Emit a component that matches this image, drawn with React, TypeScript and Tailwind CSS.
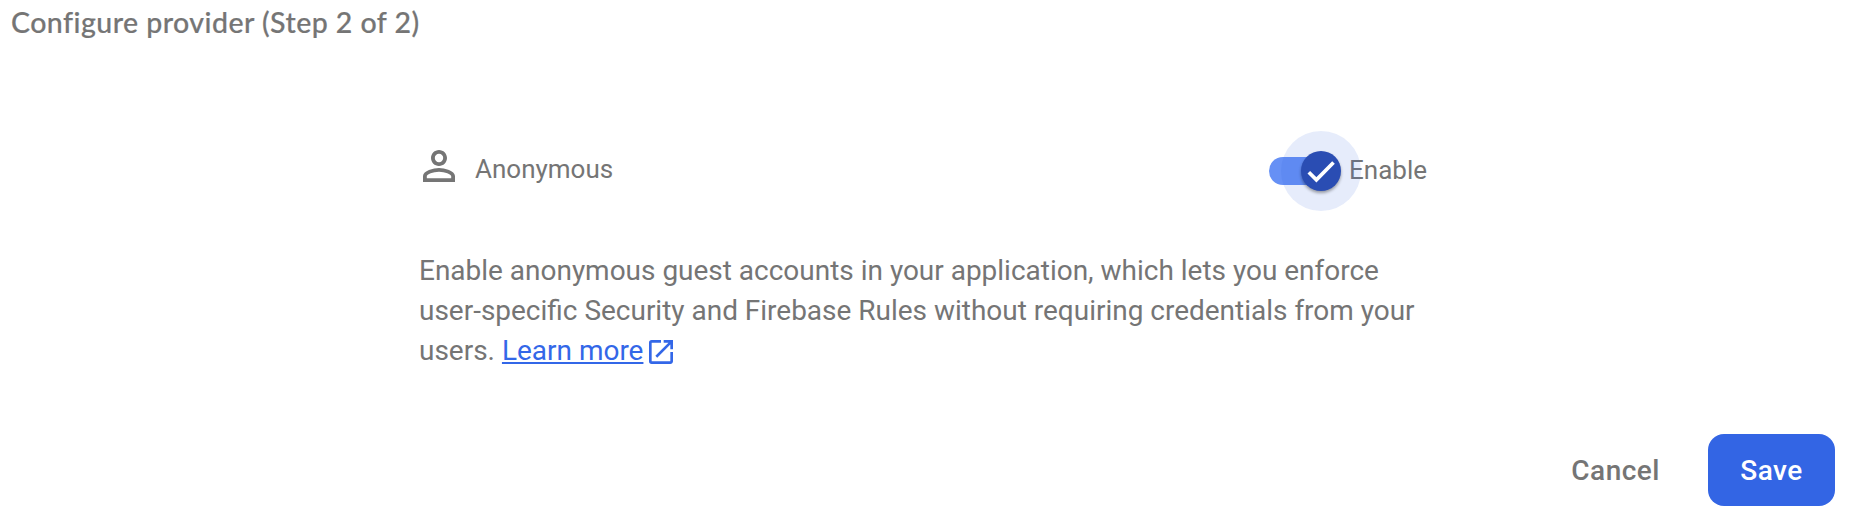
export default function App() {
  return (
    <main className="h-[528px] w-[1854px] overflow-hidden bg-white pt-[6px] font-[Roboto,sans-serif] text-[#757575]">
      <h1 className="pl-[11px] font-['Lato',sans-serif] text-[28.5px] leading-8 font-medium tracking-[0.46px] [-webkit-text-stroke:0.2px_#757575]">Configure provider (Step 2 of 2)</h1>
      <section className="mt-[93px] ml-[419px] w-[1008px]">
        <div className="flex h-20 items-center">
          <svg className="mt-[-10px] -ml-1 mr-3 h-12 w-12" viewBox="0 0 24 24" fill="currentColor">
            <path d="M12 5.9a2.1 2.1 0 1 1 0 4.2 2.1 2.1 0 0 1 0-4.2m0 9c2.97 0 6.1 1.46 6.1 2.1v1.1H5.9V17c0-.64 3.13-2.1 6.1-2.1M12 4C9.79 4 8 5.79 8 8s1.79 4 4 4 4-1.79 4-4-1.79-4-4-4zm0 9c-2.67 0-8 1.34-8 4v3h16v-3c0-2.66-5.33-4-8-4z" />
          </svg>
          <span className="-mt-[3px] text-[26px]">Anonymous</span>
          <button className="relative z-10 -mr-3 ml-auto h-20 w-[92px] shrink-0" role="switch" aria-checked="true" aria-label="Enable">
            <svg className="h-20 w-[92px] overflow-visible" viewBox="0 0 92 80">
              <rect x="0" y="26" width="70" height="28" rx="14" fill="#6690f5" />
              <circle cx="52" cy="40" r="40" fill="#2f60e0" fillOpacity=".12" />
              <circle className="drop-shadow-[0_2px_1.5px_rgba(0,0,0,0.35)]" cx="52" cy="40" r="20" fill="#2a4db3" />
              <path d="M39.8 41.2l7.6 7.6 17.1-17.3" stroke="white" strokeWidth="3.7" fill="none" />
            </svg>
          </button>
          <span className="-mt-[2px] text-[26px]">Enable</span>
        </div>
        <p className="mt-10 text-[27.98px] leading-10 whitespace-nowrap">
          Enable anonymous guest accounts in your application, which lets you enforce<br />
          user-specific Security and Firebase Rules without requiring credentials from your<br />
          users.{" "}
          <a className="text-[#3367e8]">
            <span className="underline decoration-2 underline-offset-2">Learn more</span>
            <svg className="-mt-px ml-[2px] inline h-8 w-8 align-middle" viewBox="0 0 24 24" fill="currentColor">
              <path d="M19 19H5V5h7V3H5a2 2 0 0 0-2 2v14a2 2 0 0 0 2 2h14c1.1 0 2-.9 2-2v-7h-2v7zM14 3v2h3.59l-9.83 9.83 1.41 1.41L19 6.41V10h2V3h-7z" />
            </svg>
          </a>
        </p>
      </section>
      <footer className="mt-[63px] flex justify-end pr-[19px] text-[28px] font-medium tracking-[0.5px]">
        <button className="mr-12 pt-[2px]">Cancel</button>
        <button className="h-[72px] w-[127px] rounded-2xl bg-[#3365e4] pt-[2px] text-white">Save</button>
      </footer>
    </main>
  );
}
